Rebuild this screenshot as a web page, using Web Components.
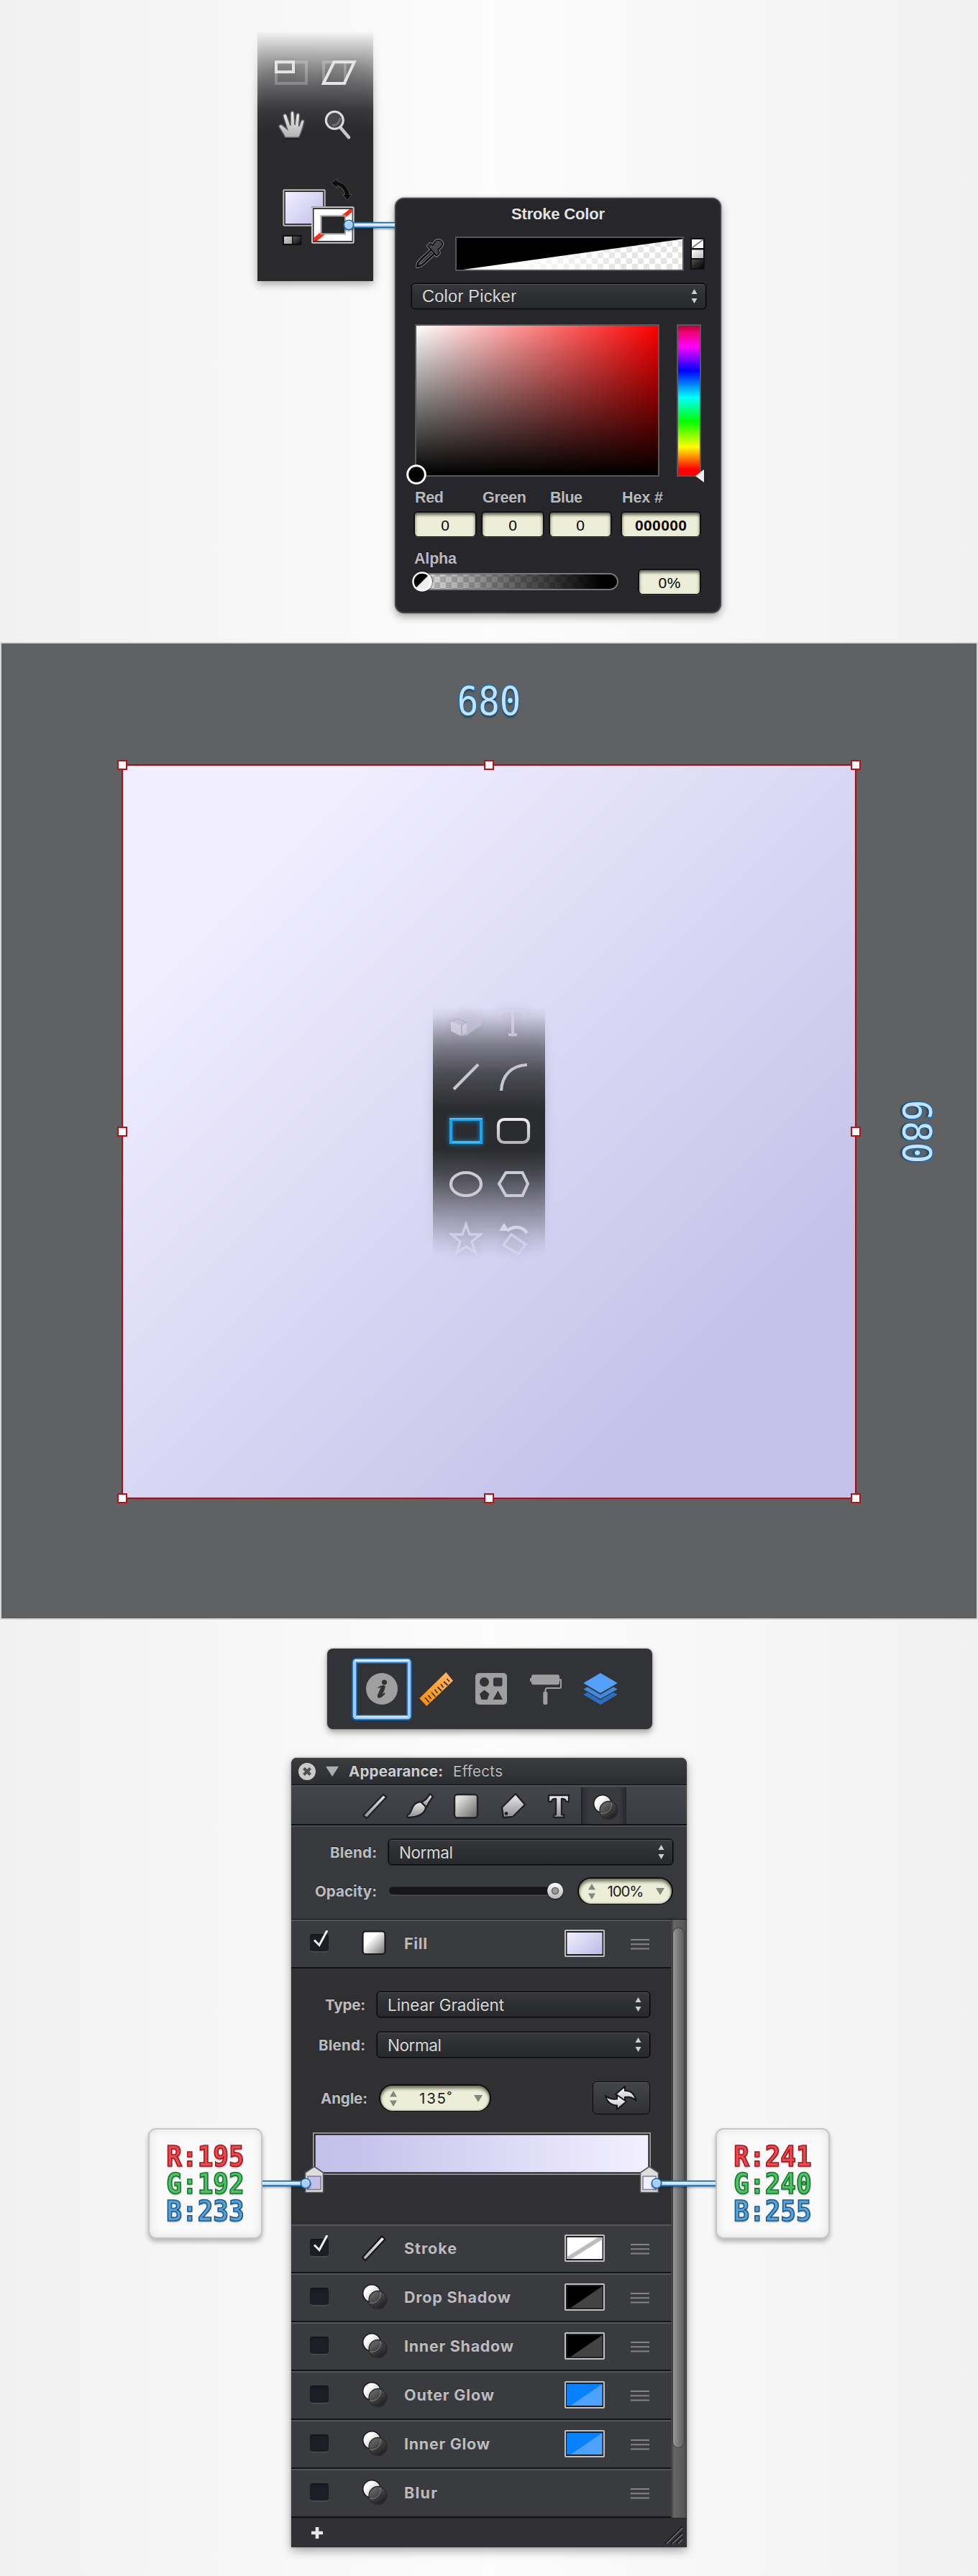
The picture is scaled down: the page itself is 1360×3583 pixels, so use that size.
<!DOCTYPE html>
<html lang="en">
<head>
<meta charset="utf-8">
<title>Gradient fill tutorial</title>
<style>
  body { margin: 0; background: linear-gradient(90deg, #f1f1f1, #fcfcfc 50%, #f1f1f1); }
</style>
</head>
<body>
<tutorial-page></tutorial-page>

<script>
const define = (name, html, setup) => customElements.define(name, class extends HTMLElement {
  connectedCallback() {
    if (this.shadowRoot) return;
    this.attachShadow({ mode: 'open' }).innerHTML = typeof html === 'function' ? html(this) : html;
    if (setup) setup(this);
  }
});

/* Text tracked out to an exact width. */
define('fit-text', `<style>
  :host { display: block; white-space: nowrap; line-height: 1; }
  span { display: inline-block; }
</style><span><slot></slot></span>`, el => {
  const span = el.shadowRoot.querySelector('span');
  const w = +el.getAttribute('w');
  if (w) {
    const n = el.textContent.length - 1 || 1;
    const now = span.getBoundingClientRect().width;
    const ls = (w - now) / n;
    span.style.letterSpacing = ls + 'px';
    span.style.marginRight = -ls + 'px';
  }
});

/* Blue callout line with a knob at one end. */
define('call-line', el => {
  const w = +el.getAttribute('w'), left = el.getAttribute('knob') === 'left';
  const cx = left ? 8 : w - 8;
  const x1 = left ? 8 : 0, x2 = left ? w : w - 8;
  return `<style>:host{display:block;line-height:0;filter:drop-shadow(0 2px 1px #0004)}</style>
  <svg width="${w}" height="18" viewBox="0 0 ${w} 18">
    <path d="M${x1} 9H${x2}" stroke="#1a6bab" stroke-width="8.4"/>
    <path d="M${x1} 9H${x2}" stroke="#b4d8fa" stroke-width="4.6"/>
    <path d="M${x1} 8H${x2}" stroke="#e2f1ff" stroke-width="2.4"/>
    <circle cx="${cx}" cy="9" r="6.7" fill="#a9cdf6" stroke="#1a6bab" stroke-width="1.8"/>
    <path d="M${cx - 5} 7.500a5.200 5.200 0 0 1 10 0" fill="none" stroke="#d5e9ff" stroke-width="1.2"/>
  </svg>`;
});

define('drop-down', `<style>
  :host { display: flex; box-sizing: border-box; height: 36px; align-items: center; justify-content: space-between;
    padding: 2px 11px 0 14px; border: 1px solid #050506; border-radius: 5px; color: #d8d8da;
    background: linear-gradient(#38393d, #2f3034 40%, #28292d); box-shadow: inset 0 1px #505155, 0 0 0 .6px #111; text-shadow: 0 -1.500px #111; }
  svg { margin-top: -2px; }
</style><slot></slot>
<svg width="9" height="22" viewBox="0 0 9 22"><path d="M4.500 1L8.500 8H.5zM4.500 21L8.500 14H.5z" fill="#cdcdcf"/></svg>`);

define('value-box', `<style>
  :host { display: flex; box-sizing: border-box; height: 36px; align-items: center; justify-content: center;
    border: 2px solid #111114; border-bottom-width: 1px; border-radius: 6px; color: #050505; background: #eceed8; text-shadow: none; padding-top: 2px;
    box-shadow: inset 0 3px 4px #5b5c4b, 0 1px #3c3c40; font: 21px "Liberation Sans", Arial, sans-serif; }
</style><slot></slot>`);

define('pill-box', `<style>
  :host { display: flex; box-sizing: border-box; height: 38px; align-items: center; justify-content: space-between;
    padding: 1px 10px 0 13px; border: 2px solid #0d0d0d; border-bottom-width: 1px; border-radius: 19px; color: #222;
    background: #eceed8; box-shadow: inset 0 4px 4px #5b5c4bcc, inset 0 0 3px #777; }
</style>
<svg width="10" height="22" viewBox="0 0 10 22"><path d="M5 0L10 8.500H0zM5 22L10 13.500H0z" fill="#85867c"/></svg>
<slot></slot>
<svg width="12" height="10" viewBox="0 0 12 10"><path d="M0 0H12L6 10z" fill="#85867c"/></svg>`);

define('tool-strip', `<style>
  :host { display: flex; flex-direction: column; width: 161px; height: 348px;
    background: linear-gradient(#2a2a2d00, #2a2a2d18 3%, #2a2a2d80 17%, #2a2a2de8 32%, #2a2a2d 41%); filter: drop-shadow(0 4px 6px #0005); }
  svg { display: block; }
</style>
<svg width="161" height="100" viewBox="0 0 161 100" fill="none">
  <path d="M26 43.300H68V73H26z" stroke="#fff" stroke-opacity=".24" stroke-width="4"/>
  <path d="M26 43.300H50V57H26z" stroke="#e4e4e6" stroke-width="4"/>
  <path d="M92 43.300H122V73H92z" stroke="#fff" stroke-opacity=".24" stroke-width="4"/>
  <path d="M106.500 43.300H134.700L120.700 73H91.800z" stroke="#e6e6e8" stroke-width="4"/>
</svg>
<svg width="161" height="60" viewBox="0 100 161 60" fill="none">
  <defs><linearGradient id="h" x2="0" y2="1"><stop stop-color="#efefef"/><stop offset="1" stop-color="#b2b2b2"/></linearGradient></defs>
  <path d="M38.500 148.200c-2-4.500-5-9-8-13.500-2.500-4 2.500-6 5-3l6 5-5.500-17c-1.500-4.500 3.500-6 5-2l5 14V115c0-4.800 5-4.800 5 0l1 16 1.700-13.500c.6-4.500 5.300-3.800 5 .5L57.500 133l3-7.500c1.500-3.500 5.500-2 4.300 2-2.300 8-3.800 15-7.300 20.700z" fill="url(#h)" stroke="#55565a" stroke-width="1.500"/>
  <path d="M37.500 150H58" stroke="#111" stroke-width="1"/>
  <path d="M115.500 134.500L127 148" stroke="#c7c7c9" stroke-width="4.600" stroke-linecap="round"/>
  <circle cx="107.300" cy="124.300" r="12" stroke="#dededf" stroke-width="3" fill="#48484c"/>
  <path d="M104 131c6 1 10-3 11-10" stroke="#747478" stroke-width="2.500"/>
</svg>
<svg width="161" height="188" viewBox="0 160 161 188" fill="none">
  <defs><linearGradient id="l" x2="1" y2=".8"><stop stop-color="#f2f0ff"/><stop offset="1" stop-color="#c6c3eb"/></linearGradient>
  <linearGradient id="d" x2="1" y2="1"><stop stop-color="#585858"/><stop offset="1" stop-color="#0c0c0c"/></linearGradient>
  <linearGradient id="g" x2="1" y2="1"><stop stop-color="#d0d0d0"/><stop offset="1" stop-color="#a2a2a2"/></linearGradient></defs>
  <path d="M107 212C117 212 124 219 125 230" stroke="#505053" stroke-width="7"/>
  <path d="M102 211.500L111 205.500V218.500zM118.500 227.500H131.500L125 235.500z" fill="#0d0d0d" stroke="#505053" stroke-width="1"/>
  <path d="M108 212C117 212 124 219 125 229" stroke="#0d0d0d" stroke-width="5.200"/>
  <rect x="36.300" y="221.300" width="57.400" height="49.400" rx="1" stroke="#b9b9ba" stroke-width="2" fill="#29292c"/>
  <rect x="38.800" y="224" width="52.400" height="44" fill="url(#l)"/>
  <rect x="75" y="244" width="60" height="52" rx="1.500" fill="#29292c"/>
  <rect x="76" y="245.300" width="57.700" height="49.400" rx="1" stroke="#c9c9ca" stroke-width="2"/>
  <rect x="78.500" y="248" width="53" height="44" fill="#fff"/>
  <path d="M78.500 292V287.500L128 248H131.500V252L83 292z" fill="#fa2d13"/>
  <rect x="88.500" y="257.300" width="33.500" height="25" fill="#28282b" stroke="#a5a5a5" stroke-width="2"/>
  <path d="M34.700 284H61.300V298H34.700z" fill="#0d0d0e"/><path d="M37 286H48V296H37z" fill="url(#g)"/><path d="M49.500 286H60V296H49.500z" fill="url(#d)"/>
</svg>`);

define('color-popover', `<style>
  :host { display: flex; flex-direction: column; box-sizing: border-box; width: 454px; height: 578px; border: 2px solid #3f4043;
    border-radius: 13px; background: #27272b; box-shadow: 0 5px 12px #0005, 0 0 3px #0006; color: #b9b9bc;
    font: 21.500px "Liberation Sans", Arial, sans-serif; text-shadow: 0 -1.500px #111; padding: 0 21px; }
  .title { color: #e3e3e4; height: 52px; display: flex; align-items: center; justify-content: center; padding-bottom: 10px; box-sizing: border-box; font-size: 22px; font-weight: bold; }
  .top { display: flex; height: 48px; align-items: center; }
  .ramp { box-sizing: border-box; width: 318px; height: 48px; border: 2px solid #555557; margin-left: 15px; }
  .ramp svg, .mini svg { display: block; }
  .mini { margin-left: 9px; }
  .dd { margin: 17px 0 21px; width: 410px; }
  .pick { display: flex; height: 212px; padding-left: 5px; gap: 24px; position: relative; }
  .field { box-sizing: border-box; width: 340px; border: 2px solid #58585a; background: linear-gradient(#0000, #000), linear-gradient(90deg, #fff, #f00); }
  .hue { box-sizing: border-box; width: 34px; border: 2px solid #58585a;
    background: linear-gradient(#b9003c, #f0006e 4%, #f0f 14%, #00f 30%, #0ff 48%, #0f0 64%, #ff0 81%, #f00 96%); }
  .knob { position: absolute; left: -8px; bottom: -12px; }
  .mark { position: absolute; left: 395px; bottom: -8px; }
  .labels { display: flex; height: 48px; align-items: center; padding: 11px 0 0 5px; box-sizing: border-box; font-weight: bold; }
  .labels > * { width: 94px; } .labels > :nth-child(3) { width: 100px; }
  .inputs { display: flex; gap: 6px; padding-left: 3px; }
  .inputs > * { width: 88px; } .inputs > :last-child { width: 112px; margin-left: 6px; }
  .alpha { font-weight: bold; padding: 20px 0 0 4px; height: 24px; }
  .last { display: flex; align-items: center; height: 36px; gap: 25px; }
  .slider { display: block; }
  .last value-box { width: 88px; }
</style>
<div class="title"><fit-text w="130">Stroke Color</fit-text></div>
<div class="top">
  <svg style="margin-left:6px" width="40" height="42" viewBox="0 0 40 42"><g transform="translate(1 1)" stroke-linejoin="round">
    <path d="M21 14L6 28L2 33L1 38L7 36L11 33L26 19z" fill="#18181b" stroke="#6f6f73" stroke-width="4.500"/>
    <path d="M16 9L19 6L23 8C26 1 31-1 35 3C38 7 35 11 30 14L32 19L28 23z" fill="#39393d" stroke="#77777a" stroke-width="4"/>
    <path d="M21 14L6 28L2 33L1 38L7 36L11 33L26 19z" fill="#47474b" stroke="#0c0c0e" stroke-width="2"/>
    <path d="M21 17L7 31L5 35L9 32L23 19z" fill="#28282b" stroke="#77777a" stroke-width="1"/>
    <path d="M16 9L19 6L23 8C26 1 31-1 35 3C38 7 35 11 30 14L32 19L28 23z" fill="#47474b" stroke="#0c0c0e" stroke-width="1.600"/></g></svg>
  <div class="ramp"><svg width="314" height="44" viewBox="0 0 314 44">
    <defs><pattern id="c" width="16" height="16" patternUnits="userSpaceOnUse"><path d="M0 0H16V16H0z" fill="#fff"/><path d="M4 4h8v8h-8zM-4-4h8v8h-8zM12-4h8v8h-8zM-4 12h8v8h-8zM12 12h8v8h-8z" fill="#e4e4e4"/></pattern>
    <linearGradient id="f"><stop stop-color="#fff"/><stop offset=".18" stop-color="#fff"/><stop offset=".75" stop-color="#fff" stop-opacity="0"/></linearGradient></defs>
    <path d="M0 0H314V44H0z" fill="url(#c)"/><path d="M0 0H314V44H0z" fill="url(#f)"/><path d="M0 0H314V1.500L9 44H0z"/></svg></div>
  <div class="mini"><svg width="20" height="44" viewBox="0 0 20 44"><defs><linearGradient id="a" x2="1" y2="1"><stop stop-color="#fff"/><stop offset="1" stop-color="#b9b9b9"/></linearGradient><linearGradient id="b" x2="1" y2="1"><stop stop-color="#505050"/><stop offset="1"/></linearGradient></defs>
    <path d="M0 0H20V44H0z" fill="#111113"/><path d="M2 2H18V14H2z" fill="#fff"/><path d="M2 14L18 2" stroke="#777" stroke-width="1.600"/><path d="M2 16.500H18V28H2z" fill="url(#a)"/><path d="M2 30H18V42H2z" fill="url(#b)"/></svg></div>
</div>
<drop-down class="dd"><fit-text w="131" style="font-size:23.500px">Color Picker</fit-text></drop-down>
<div class="pick"><div class="field"></div><div class="hue"></div>
  <svg class="knob" width="30" height="30"><circle cx="15" cy="15" r="12.300" stroke="#fff" stroke-width="3"/></svg>
  <svg class="mark" width="12" height="18"><path d="M0 9L12 0V18z" fill="#eee"/></svg></div>
<div class="labels"><fit-text w="40">Red</fit-text><fit-text w="61">Green</fit-text><fit-text w="45">Blue</fit-text><fit-text w="57">Hex #</fit-text></div>
<div class="inputs"><value-box>0</value-box><value-box>0</value-box><value-box>0</value-box><value-box><fit-text w="72" style="font-weight:bold">000000</fit-text></value-box></div>
<div class="alpha"><fit-text w="59">Alpha</fit-text></div>
<div class="last">
  <svg class="slider" width="290" height="30" viewBox="0 0 290 30"><defs>
    <pattern id="p" width="16" height="16" patternUnits="userSpaceOnUse"><path d="M0 0H16V16H0z" fill="#fff"/><path d="M0 0h8v8h-8zM8 8h8v8h-8z" fill="#d4d4d4"/></pattern>
    <linearGradient id="q"><stop stop-opacity=".08"/><stop offset=".5" stop-opacity=".62"/><stop offset=".92"/></linearGradient></defs>
    <rect x="3" y="4" width="284" height="22" rx="11" fill="url(#p)"/><rect x="3" y="4" width="284" height="22" rx="11" fill="url(#q)" stroke="#77777a" stroke-width="2"/>
    <circle cx="15.500" cy="15" r="14.600" fill="#0005"/><circle cx="15" cy="15" r="12.300" fill="#eee" stroke="#fff" stroke-width="3"/><path d="M7 23A11.200 11.200 0 0 1 23 7z"/></svg>
  <value-box><fit-text w="31">0%</fit-text></value-box>
</div>`);

define('shape-strip', `<style>
  :host { display: block; width: 156px; height: 348px;
    background: linear-gradient(#2b2c2f00, #2b2c2f12 4%, #2b2c2f80 16%, #2b2c2fc8 27%, #2b2c2f 41%, #2b2c2f 57%, #2b2c2fd0 66%, #2b2c2f70 79%, #2b2c2f18 93%, #2b2c2f00); filter: drop-shadow(0 0 7px #3333); }
  svg { display: block; }
</style>
<svg width="156" height="348" viewBox="0 0 156 348" fill="none">
  <defs><linearGradient id="n" x2="0" y2="1"><stop stop-color="#ebebeb"/><stop offset="1" stop-color="#b5b5b5"/></linearGradient></defs>
  <g opacity=".55"><path d="M25 20L47 8L67 16V26L47 40L39 41L25 34z" fill="#cbc8e4"/><path d="M25 21L40 26L47 22V36L39 41L25 34z" fill="#eceafa"/><path d="M25 21L34 17L47 22L40 26V41" stroke="#9d9bb5" stroke-width="1"/></g>
  <path d="M95 12V6H127V12M111 6V38M105 39.300H117" stroke="#d5d2ee" stroke-opacity=".75" stroke-width="4"/>
  <path d="M29 115L63 80.500" stroke="#c6c5d3" stroke-width="4.200"/>
  <path d="M95 117C96 97 108 82 131 81" stroke="#c6c5d3" stroke-width="4.200"/>
  <g style="filter:drop-shadow(0 0 3px #1787cc)"><path d="M25 157H67V189H25z" stroke="#16a6f0" stroke-width="4"/><path d="M23 156H69M27 188.500H65" stroke="#57c4f7" stroke-width="2"/></g>
  <rect x="91" y="157" width="42" height="32" rx="8" stroke="url(#n)" stroke-width="4.200"/>
  <ellipse cx="46" cy="247" rx="21" ry="16" stroke="#cbcad5" stroke-width="4.200"/>
  <path d="M101.500 231H124.500L132 246.500L124.500 263H101.500L92 246.500z" stroke="#cbcad8" stroke-width="4"/>
  <path d="M46 303L51 317H66L54 327L59 342L46 334L33 342L38 327L26 317H41z" stroke="#d9d6f0" stroke-opacity=".8" stroke-width="3.500"/>
  <path d="M103 312C113 304 125 306 131 315" stroke="#d7d4ee" stroke-width="4.500"/><path d="M92 312L99 301L106 312z" fill="#d7d4ee"/>
  <path d="M109 317L129 331L119 344L98 332z" stroke="#d6d3ee" stroke-opacity=".8" stroke-width="3.500"/>
</svg>`);

define('size-label', `<style>
  :host { display: block; font: 49px/50px "DejaVu Sans Mono", monospace; color: #c3e2ff; paint-order: stroke fill;
    -webkit-text-stroke: 3px #1970b5; text-shadow: 0 3px 2px #0005; transform: scaleY(1.12); }
  :host([side]) { transform: rotate(90deg) scaleY(1.12); }
</style><slot></slot>`);

define('art-board', `<style>
  :host { display: flex; flex-direction: column; box-sizing: border-box; height: 1360px; border: 2px solid #d9d9d9; background: #606162; }
  .top { height: 168px; display: flex; align-items: center; justify-content: center; box-sizing: border-box; padding-bottom: 6px; }
  .mid { display: flex; }
  .gap { width: 167px; }
  .sq { position: relative; box-sizing: border-box; width: 1022px; height: 1022px; border: 2px solid #99161d; display: flex; align-items: center; justify-content: center;
    background: linear-gradient(135deg, #f1efff 14%, #c3c0e9 84%); box-shadow: inset 0 0 0 1px #e8b9ce; }
  .side { flex: 1; display: flex; align-items: center; justify-content: center; }
  i { position: absolute; box-sizing: border-box; width: 14px; height: 14px; border: 2px solid #b31218; background: #fff; }
</style>
<div class="top"><size-label>680</size-label></div>
<div class="mid"><div class="gap"></div><div class="sq"><shape-strip></shape-strip></div><div class="side"><size-label side>680</size-label></div></div>`, el => {
  const sq = el.shadowRoot.querySelector('.sq');
  for (const y of [0, 1, 2]) for (const x of [0, 1, 2]) {
    if (x === 1 && y === 1) continue;
    const i = document.createElement('i');
    i.style.left = x * 510 - 8 + 'px'; i.style.top = y * 510 - 8 + 'px';
    sq.append(i);
  }
});

define('studio-bar', `<style>
  :host { display: block; width: 452px; height: 112px; border-radius: 8px; background: #323337; box-shadow: 0 5px 10px #0005, 0 0 3px #0005; }
  svg { display: block; }
  </style>
<svg width="452" height="112" viewBox="0 0 452 112">
  <defs><linearGradient id="r" x1="0" y1="1" x2="1" y2="0"><stop stop-color="#ff8c00"/><stop offset="1" stop-color="#ffb967"/></linearGradient></defs>
  <rect x="38" y="17" width="76" height="79" rx="2" fill="none" stroke="#0f66ae" stroke-width="8"/>
  <rect x="38" y="17" width="76" height="79" rx="2" fill="none" stroke="#9fcbf6" stroke-width="4.400"/>
  <path d="M38 16.300H114M40 94.500H112" stroke="#e2f1ff" stroke-width="2"/>
  <circle cx="76" cy="56" r="22" fill="#9f9f9f"/><circle cx="79.500" cy="47" r="3.600" fill="#323337"/>
  <path d="M71 54.500C74 52.500 78 51.500 79.500 52.500C81 54 76 62 75.500 65C75.500 66.500 78.500 64 80 62" fill="none" stroke="#323337" stroke-width="2"/>
  <path d="M74.500 52.500L80.500 52C79 58 76 62 76 64.500L80.500 61C78 67 74 69.500 71 68.500C67.500 66.500 73 60 74.300 54.300z" fill="#323337"/>
  <path d="M165.300 33L175 44.700L138.300 80L128.300 69.300z" fill="url(#r)"/>
  <path d="M136 68L142 75M140.500 65L144.500 70M145 61L150.500 67M149.500 57L153.500 62M153.500 53.500L159 59M158 49.500L161.500 54M162 46L167.500 51M166.500 42L170 46" stroke="#323337" stroke-width="1.800"/>
  <rect x="206" y="34" width="44" height="44" rx="5" fill="#9f9f9f"/><circle cx="218.500" cy="46.500" r="6.500" fill="#323337"/><rect x="231" y="40.500" width="12.500" height="12" rx="2" fill="#323337"/>
  <path d="M218.500 57.500L225.500 63L222.500 71H214.500L212 63zM237.500 58.500L244 71H230.500z" fill="#323337"/>
  <rect x="284" y="36.300" width="39" height="14" rx="3" fill="#9f9f9f"/><path d="M282 41H286V46H282z" fill="#9f9f9f"/>
  <path d="M322 43.500H325V53.500Q325 55 323.500 55H306Q303.500 55 303.500 58V61" fill="none" stroke="#9f9f9f" stroke-width="2"/><rect x="300.300" y="60" width="6" height="18" rx="2" fill="#9f9f9f"/>
  <path d="M356.300 64L380 78L403.700 64L398 61L380 71.500L362 61z" fill="#2c6fc0"/><path d="M356.300 56.500L380 70L403.700 56.500L398 53.500L380 64L362 53.500z" fill="#4089dd"/><path d="M380 34L403.700 48L380 62L356.300 48z" fill="#55a0fb"/>
</svg>`);

define('rgb-card', `<style>
  :host { display: flex; flex-direction: column; align-items: center; box-sizing: border-box; width: 159px; height: 154px; margin-top: 515px; padding-top: 19px;
    border: 2px solid #c6c6c6; border-radius: 11px; background: #fafafa; box-shadow: inset 0 0 12px #ddd, inset 0 2px #fff, 0 4px 6px #0004; }
  ::slotted(span) { display: block; font: bold 36px/38px "DejaVu Sans Mono", monospace; transform: scaleY(1.07); -webkit-text-stroke: 1.600px var(--o); color: var(--f); text-shadow: 0 2px 2px #0004; }
  ::slotted(:nth-child(1)) { --f: #f2454c; --o: #a3191f; }
  ::slotted(:nth-child(2)) { --f: #4bc362; --o: #16782d; }
  ::slotted(:nth-child(3)) { --f: #56a2da; --o: #1c5b8c; }
</style><slot></slot>`);

const orbs = `<svg width="36" height="38" viewBox="0 0 36 38"><defs><linearGradient id="o" x2="1" y2="1"><stop offset=".3" stop-color="#fff"/><stop offset="1" stop-color="#aaa"/></linearGradient><linearGradient id="u" x2=".7" y2="1"><stop stop-color="#6a6a6a"/><stop offset="1" stop-color="#1c1c1c"/></linearGradient></defs>
  <circle cx="14" cy="14" r="12.300" fill="url(#o)" stroke="#19191b" stroke-width="1.600"/><circle cx="22.500" cy="23" r="12.500" fill="url(#u)" fill-opacity=".93" stroke="#2a2a2a" stroke-width="1.400"/><path d="M11 27A12.500 12.500 0 0 0 26 12" fill="none" stroke="#8b8b8b" stroke-width="1"/></svg>`;
const slash = `<svg width="36" height="38" viewBox="0 0 36 38"><defs><linearGradient id="s" x2="0" y2="1"><stop stop-color="#f5f5f5"/><stop offset="1" stop-color="#a9a9a9"/></linearGradient></defs><path d="M28 2.500L32.500 6.500L5 36L.8 32z" fill="url(#s)" stroke="#151517" stroke-width="2.200" stroke-linejoin="round"/></svg>`;
const square = `<svg width="36" height="38" viewBox="0 0 36 38"><defs><linearGradient id="z" x2="1" y2="1"><stop offset=".35" stop-color="#fff"/><stop offset="1" stop-color="#6d6d6d"/></linearGradient></defs><rect x="1.500" y="2.500" width="31" height="31.500" rx="4" fill="url(#z)" stroke="#18181a" stroke-width="2.200"/></svg>`;

define('effect-row', el => {
  const icon = { orbs, slash, square }[el.getAttribute('icon')];
  const sw = { lilac: '<path d="M0 0H49V30H0z" fill="url(#l)"/>', none: '<path d="M0 0H49V30H0z" fill="#fff"/><path d="M0 30V27L43 0H49V3L6 30z" fill="#bdbdbd"/>',
    black: '<path d="M0 0H49V30H0z" fill="#434344"/><path d="M0 0H49L5 30H0z"/>', blue: '<path d="M0 0H49V30H0z" fill="#4fa1ff"/><path d="M0 0H49L5 30H0z" fill="#0681ff"/>' }[el.getAttribute('swatch')];
  return `<style>
  :host { display: flex; box-sizing: border-box; height: 68px; width: 528px; border-top: 2px solid #545559; border-bottom: 2px solid #111116; background: #3a3b3f; color: #bcbcc0; padding: 0 29px 0 26px; }
  :host > *, .cb, .ic, fit-text, .sw, .hb { flex: none; }
  .cb { width: 26px; height: 24px; border-radius: 4px; background: #1d1e25; margin-top: 18px; box-shadow: 0 1.500px #4b4c50, inset 0 2px 2px #15161b; }
  .cb svg { display: block; margin-top: -5px; }
  .ic { width: 36px; height: 38px; margin: 12px 0 0 46px; }
  fit-text { font: 700 21.500px/24px Inter, sans-serif; margin: 19px 0 0 23px; width: 200px; text-shadow: 0 -1px #222; }
  .sw { width: 56px; height: 38px; margin: 12px 0 0 23px; }
  .hb { margin: 24px 0 0 36px; }
  svg { display: block; }
  </style>
  <div class="cb">${el.hasAttribute('on') ? '<svg width="26" height="24" viewBox="0 0 26 24"><path d="M6 13.500L13 20.500L24 0" fill="none" stroke="#f0f0f0" stroke-width="3"/></svg>' : ''}</div>
  <div class="ic">${icon}</div><fit-text><slot></slot></fit-text>
  <div class="sw">${sw ? `<svg width="56" height="38" viewBox="0 0 56 38"><defs><linearGradient id="l" x2="1" y2=".7"><stop stop-color="#f1efff"/><stop offset="1" stop-color="#c3c0e9"/></linearGradient></defs><rect x="1" y="1" width="54" height="36" rx="1" fill="#1f2024" stroke="#bfbfbf" stroke-width="2"/><g transform="translate(3.500 4)">${sw}</g></svg>` : ''}</div>
  <svg class="hb" width="26" height="16" viewBox="0 0 26 16"><path d="M0 2H26M0 8.200H26M0 14.400H26" stroke="#848486" stroke-width="2"/></svg>`;
}, el => {
  /* The label is slotted through, so its length is taken from the host. */
  const s = el.shadowRoot.querySelector('fit-text').shadowRoot.querySelector('span');
  s.style.letterSpacing = (+el.getAttribute('w') - s.getBoundingClientRect().width) / (el.textContent.length - 1) + 'px';
});

define('effects-panel', `<style>
  :host { display: flex; flex-direction: column; width: 550px; height: 1098px; border-radius: 8px 8px 0 0; background: #303033; overflow: hidden; font: 20.500px Inter, sans-serif; color: #bcbcc0; text-shadow: 0 -1px #151515; }
  svg { display: block; }
  .head { display: flex; align-items: center; height: 38px; box-sizing: border-box; padding: 1px 0 0 10px; border-bottom: 1px solid #111; background: linear-gradient(#3b3c3e, #2c2d30); box-shadow: inset 0 1px #444649; }
  .lab { font-weight: 700; text-align: right; margin-right: 16px; display: flex; justify-content: flex-end; padding-top: 2px; }
  .tools { height: 56px; box-sizing: border-box; border-bottom: 2px solid #121216; background: linear-gradient(#45464b, #3a3c43); box-shadow: inset 0 2px #505156; }
  .blend { box-sizing: border-box; height: 131px; background: #38393d; border-top: 2px solid #4d4e52; border-bottom: 1px solid #111; padding-top: 17px; }
  .line { display: flex; align-items: center; }
  .body { display: flex; height: 832px; background: #3a3b3f; }
  .list { width: 528px; }
  .detail { height: 356px; box-sizing: border-box; background: #303033; padding-top: 32px; }
  .detail .lab { width: 103px; }
  .detail drop-down { width: 380px; }
  .btn { box-sizing: border-box; width: 80px; height: 46px; border: 1.500px solid #08080a; border-radius: 6px; background: linear-gradient(#44454a, #303135); margin-left: 141px; box-shadow: inset 0 1px #58595d; }
  .ramp { display: block; margin: 24px 0 0 18px; }
  .scroll { width: 22px; box-sizing: border-box; background: linear-gradient(90deg, #3a3a3c, #666 20%, #555 90%, #333); padding: 11px 3px 0 2px; }
  .thumb { height: 724px; border-radius: 9px; border: 1px solid #3a3a3a; background: linear-gradient(90deg, #999, #858585 30%, #5e5e5e); box-sizing: border-box; }
  .foot { height: 41px; display: flex; justify-content: space-between; background: #313135; border-top: 1px solid #27272a; box-sizing: border-box; padding: 11px 5px 0 27px; }
</style>
<div class="head">
  <svg width="24" height="24" viewBox="0 0 24 24"><circle cx="12" cy="12" r="12" fill="#cacaca"/><path d="M7.500 7.500L16.500 16.500M16.500 7.500L7.500 16.500" stroke="#505052" stroke-width="4"/></svg>
  <svg style="margin-left:14px" width="18" height="14" viewBox="0 0 18 14"><path d="M0 0H18L9 14z" fill="#adadb0"/></svg>
  <fit-text w="131" style="font-weight:700;margin-left:14px;color:#ccccd0">Appearance:</fit-text><fit-text w="69" style="margin-left:14px">Effects</fit-text>
</div>
<div class="tools"><svg width="550" height="54" viewBox="0 38 550 54">
  <defs><linearGradient id="i" x2="0" y2="1"><stop stop-color="#ededed"/><stop offset="1" stop-color="#8f8f93"/></linearGradient><linearGradient id="j" x2="1" y2="1"><stop offset=".2" stop-color="#dedede"/><stop offset="1" stop-color="#626262"/></linearGradient>
  <linearGradient id="k"><stop stop-color="#1d1e22"/><stop offset=".05" stop-color="#303137"/><stop offset=".2" stop-color="#393a40"/><stop offset=".85" stop-color="#393a40"/><stop offset="1" stop-color="#26272c"/></linearGradient></defs>
  <g fill="url(#i)" stroke="#202126" stroke-width="2.400" stroke-linejoin="round">
  <path d="M128 51L132.500 54.500L105 84L100 80z"/>
  <path d="M193 50L197 54L191 63L188 69L181 62L188 57z"/><path d="M180 61L187 68C187 77 177 83 162 83C161 82 161 80 162 79C168 79 166 62 180 61z"/>
  <rect x="227" y="51" width="32" height="32.500" rx="4" fill="url(#j)"/>
  <path d="M312 50L325 65L308 82L295 83L293 69z"/>
  <path d="M358 52H386V61H382C381.500 57.500 380 57 376 57V79H379V83H365V79H368V57C364 57 362.500 57.500 362 61H358z"/></g>
  <circle cx="299" cy="77.500" r="2.400" fill="#222"/>
  <path d="M403 41H466V92H403z" fill="url(#k)"/>
  <g transform="translate(419 50)">${orbs.replace(/<\/?svg[^>]*>/g, '')}</g></svg></div>
<div class="blend">
  <div class="line"><div class="lab" style="width:119px"><fit-text w="65">Blend:</fit-text></div><drop-down style="width:396px"><fit-text w="75" style="font-size:22.500px">Normal</fit-text></drop-down></div>
  <div class="line" style="margin-top:17px"><div class="lab" style="width:119px"><fit-text w="86">Opacity:</fit-text></div>
    <svg width="244" height="28" viewBox="0 0 244 28"><defs><linearGradient id="v" x2="0" y2="1"><stop stop-color="#fff"/><stop offset="1" stop-color="#b5b5b5"/></linearGradient></defs><rect x="1" y="9" width="238" height="12" rx="5" fill="#4d4e51"/><rect x="1" y="8.500" width="238" height="11" rx="5" fill="#17171a"/><circle cx="232" cy="15.500" r="11.300" fill="#0006"/><circle cx="232" cy="14" r="11" fill="url(#v)"/><circle cx="232" cy="14" r="4.500" fill="#999" stroke="#67676a" stroke-width="1.600"/></svg>
    <pill-box style="width:133px;margin-left:19px"><fit-text w="51" style="text-shadow:none">100%</fit-text></pill-box></div>
</div>
<div class="body"><div class="list">
  <effect-row on icon="square" swatch="lilac" w="32">Fill</effect-row>
  <div class="detail">
    <div class="line"><div class="lab"><fit-text w="56">Type:</fit-text></div><drop-down><fit-text w="162" style="font-size:22.500px">Linear Gradient</fit-text></drop-down></div>
    <div class="line" style="margin-top:20px"><div class="lab"><fit-text w="65">Blend:</fit-text></div><drop-down><fit-text w="75" style="font-size:22.500px">Normal</fit-text></drop-down></div>
    <div class="line" style="margin-top:33px"><div class="lab" style="width:106px"><fit-text w="65">Angle:</fit-text></div><pill-box style="width:156px"><fit-text w="45" style="text-shadow:none">135˚</fit-text></pill-box>
      <div class="btn"><svg width="77" height="43" viewBox="0 0 77 43"><defs><linearGradient id="x" x2="0" y2="1"><stop stop-color="#fff"/><stop offset="1" stop-color="#bcbcbc"/></linearGradient></defs><g fill="url(#x)" stroke="#151517" stroke-width="2" stroke-linejoin="round"><path d="M31 17L44 6V12C53 12 58 18 59.500 26C55 21 51 20.500 44 21V27z"/><path d="M46 27L33 38V32.500C24 32 19 27 17 19C22 23.500 26 24 33 23.500V18z"/></g></svg></div></div>
    <svg class="ramp" width="494" height="86" viewBox="0 0 494 86"><defs><linearGradient id="y"><stop stop-color="#c3c0e9"/><stop offset=".15" stop-color="#c7c4ec"/><stop offset="1" stop-color="#f2f0ff"/></linearGradient></defs>
      <rect x="13" y="2" width="468" height="57" fill="url(#y)" stroke="#9d9d9e" stroke-width="2"/><rect x="14.700" y="3.700" width="464.600" height="53.600" fill="none" stroke="#151519" stroke-width="1.800"/>
      <g fill="#dededc" stroke="#55565a" stroke-width="1.600"><path d="M14 48.500L26.500 57V84.500H1.500V57zM480 48.500L492.500 57V84.500H467.500V57z"/></g><path d="M5 62H23V80.500H5z" fill="#c3c0e9" stroke="#7d7d8e" stroke-width="1.500"/><path d="M471 62H489V80.500H471z" fill="#f1efff" stroke="#7d7d8e" stroke-width="1.500"/></svg>
  </div>
  <effect-row on icon="slash" swatch="none" w="73">Stroke</effect-row>
  <effect-row icon="orbs" swatch="black" w="148">Drop Shadow</effect-row>
  <effect-row icon="orbs" swatch="black" w="152">Inner Shadow</effect-row>
  <effect-row icon="orbs" swatch="blue" w="125">Outer Glow</effect-row>
  <effect-row icon="orbs" swatch="blue" w="119">Inner Glow</effect-row>
  <effect-row icon="orbs" w="46">Blur</effect-row>
</div><div class="scroll"><div class="thumb"></div></div></div>
<div class="foot"><svg width="18" height="18" viewBox="0 0 18 18"><path d="M9 1V17M1 9H17" stroke="#e9e9ea" stroke-width="4.600"/></svg>
<svg width="27" height="26" viewBox="0 0 27 26"><path d="M2 24L26 0M10 24L26 9M18 24L26 16" stroke="#18181a" stroke-width="2"/><path d="M4 24L26 2M12 24L26 11M20 24L26 18" stroke="#737376" stroke-width="1.500"/></svg></div>`);

define('tutorial-page', `<style>
  :host { display: block; width: 1360px; height: 3583px; overflow: hidden; position: relative; isolation: isolate; }
  .one { display: flex; box-sizing: border-box; height: 893px; padding: 43px 0 0 358px; gap: 30px; align-items: flex-start; position: relative; }
  color-popover { margin-top: 232px; }
  .three { display: flex; flex-direction: column; padding-top: 40px; gap: 40px; position: relative; }
  studio-bar { margin-left: 455px; }
  .row { display: flex; padding-left: 206px; gap: 40px; align-items: flex-start; }
  .shade { box-shadow: 0 5px 14px #0005, 0 0 3px #0005; border-radius: 8px 8px 0 0; }
  call-line { position: absolute; }
</style>
<div class="one"><tool-strip></tool-strip><color-popover></color-popover><call-line w="72" knob="left" style="left:477px;top:304px"></call-line></div>
<art-board></art-board>
<div class="three"><studio-bar></studio-bar>
  <div class="row"><rgb-card><span>R:195</span><span>G:192</span><span>B:233</span></rgb-card><div class="shade"><effects-panel></effects-panel></div><rgb-card><span>R:241</span><span>G:240</span><span>B:255</span></rgb-card></div>
  <call-line w="68" knob="right" style="left:365px;top:775px"></call-line><call-line w="90" knob="left" style="left:905px;top:775px"></call-line>
</div>`);
</script>
</body>
</html>
